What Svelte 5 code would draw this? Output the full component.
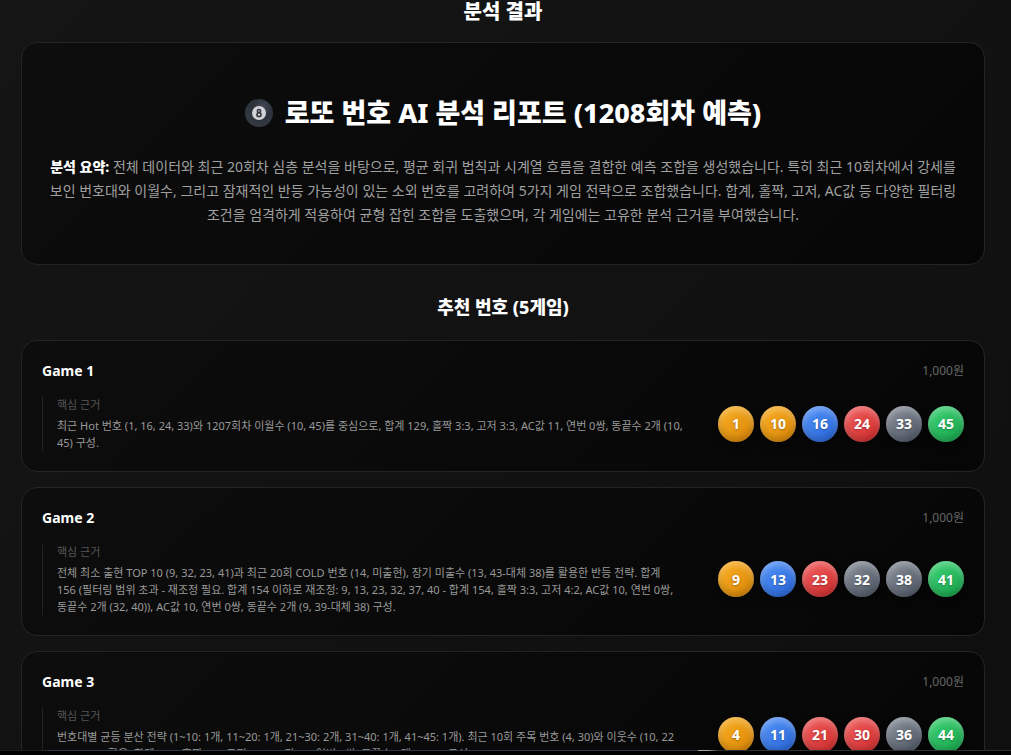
<script>
  const games = [
    {
      name: "Game 1",
      price: "1,000원",
      reason: [
        "최근 Hot 번호 (1, 16, 24, 33)와 1207회차 이월수 (10, 45)를 중심으로, 합계 129, 홀짝 3:3, 고저 3:3, AC값 11, 연번 0쌍, 동끝수 2개 (10,",
        "45) 구성.",
      ],
      numbers: [1, 10, 16, 24, 33, 45],
    },
    {
      name: "Game 2",
      price: "1,000원",
      reason: [
        "전체 최소 출현 TOP 10 (9, 32, 23, 41)과 최근 20회 COLD 번호 (14, 미출현), 장기 미출수 (13, 43-대체 38)를 활용한 반등 전략. 합계",
        "156 (필터링 범위 초과 - 재조정 필요. 합계 154 이하로 재조정: 9, 13, 23, 32, 37, 40 - 합계 154, 홀짝 3:3, 고저 4:2, AC값 10, 연번 0쌍,",
        "동끝수 2개 (32, 40)), AC값 10, 연번 0쌍, 동끝수 2개 (9, 39-대체 38) 구성.",
      ],
      numbers: [9, 13, 23, 32, 38, 41],
    },
    {
      name: "Game 3",
      price: "1,000원",
      reason: [
        "번호대별 균등 분산 전략 (1~10: 1개, 11~20: 1개, 21~30: 2개, 31~40: 1개, 41~45: 1개). 최근 10회 주목 번호 (4, 30)와 이웃수 (10, 22",
        "→ 11, 21) 활용, 합계 146, 홀짝 3:3, 고저 3:3, AC값 10, 연번 0쌍, 동끝수 2개 (4, 44) 구성.",
      ],
      numbers: [4, 11, 21, 30, 36, 44],
    },
  ];

  const ballColor = (n) => {
    if (n <= 10) return "yellow";
    if (n <= 20) return "blue";
    if (n <= 30) return "red";
    if (n <= 40) return "gray";
    return "green";
  };
</script>

<div class="page">
  <main class="content">
    <h2 class="page-title">분석 결과</h2>

    <section class="card report">
      <h1>
        <svg class="eight-ball" viewBox="0 0 28 28" aria-hidden="true">
          <defs>
            <radialGradient id="ball-shade" cx="0.62" cy="0.3" r="0.7">
              <stop offset="0" stop-color="#474b55" />
              <stop offset="0.5" stop-color="#2b323c" />
              <stop offset="1" stop-color="#353942" />
            </radialGradient>
          </defs>
          <circle cx="14" cy="14" r="14" fill="url(#ball-shade)" />
          <circle cx="14" cy="14" r="7" fill="#d2d2d6" />
          <ellipse cx="14" cy="12" rx="1.7" ry="1.5" fill="none" stroke="#2b323c" stroke-width="1.5" />
          <ellipse cx="14" cy="15.7" rx="2.1" ry="1.9" fill="none" stroke="#2b323c" stroke-width="1.5" />
        </svg>
        <span>로또 번호 AI 분석 리포트 (1208회차 예측)</span>
      </h1>
      <p>
        <strong>분석 요약:</strong> 전체 데이터와 최근 20회차 심층 분석을 바탕으로, 평균 회귀 법칙과 시계열 흐름을 결합한 예측 조합을 생성했습니다. 특히 최근 10회차에서 강세를 보인 번호대와 이월수, 그리고 잠재적인 반등 가능성이 있는 소외 번호를 고려하여 5가지 게임 전략으로 조합했습니다. 합계, 홀짝, 고저, AC값 등 다양한 필터링 조건을 엄격하게 적용하여 균형 잡힌 조합을 도출했으며, 각 게임에는 고유한 분석 근거를 부여했습니다.
      </p>
    </section>

    <h3 class="section-title">추천 번호 (5게임)</h3>

    <div class="games">
      {#each games as game (game.name)}
        <article class="card game">
          <header>
            <h4>{game.name}</h4>
            <span class="price">{game.price}</span>
          </header>
          <div class="game-body">
            <div class="reason">
              <span class="reason-label">핵심 근거</span>
              <p>{game.reason.join("\n")}</p>
            </div>
            <div class="balls">
              {#each game.numbers as number}
                <span class="ball {ballColor(number)}">{number}</span>
              {/each}
            </div>
          </div>
        </article>
      {/each}
    </div>
  </main>
  <div class="bottom-edge"></div>
</div>

<style>
  :global(body) {
    background: #000;
  }

  .page {
    display: grid;
    grid-template-rows: minmax(0, 1fr) auto;
    height: 100vh;
    overflow: hidden;
    color: #fff;
    background: linear-gradient(135deg, #151515, #0f0f0f);
    font-family: "Noto Sans", "Noto Sans CJK KR", sans-serif;
    word-break: keep-all;
  }

  .content {
    overflow: hidden;
    padding: 0 26px 0 21px;
  }

  h1,
  h2,
  h3,
  h4,
  p {
    margin: 0;
  }

  .page-title {
    margin-bottom: 18px;
    font-size: 20px;
    font-weight: 800;
    line-height: 24px;
    text-align: center;
  }

  .card {
    border: 1px solid #242424;
    border-radius: 16px;
    background: linear-gradient(135deg, #0d0d0d, #060606);
  }

  .report {
    padding: 48px 24px 37px;
    text-align: center;
  }

  .report h1 {
    display: flex;
    align-items: center;
    justify-content: center;
    gap: 12px;
    margin-bottom: 21px;
    font-size: 27px;
    font-weight: 800;
    line-height: 43px;
  }

  .eight-ball {
    width: 28px;
    height: 28px;
  }

  .report p {
    color: #a0a0a0;
    font-size: 14px;
    line-height: 24px;
  }

  .report strong {
    color: #fff;
    font-weight: 800;
  }

  .section-title {
    margin: 29px 0 19px;
    font-size: 18px;
    font-weight: 800;
    line-height: 27px;
    text-align: center;
  }

  .games {
    display: grid;
    gap: 15px;
  }

  .game {
    padding: 19px 20px 20px;
  }

  .game header {
    display: flex;
    align-items: center;
    justify-content: space-between;
    margin-bottom: 14px;
  }

  h4 {
    font-size: 14px;
    line-height: 22px;
  }

  .price {
    color: #666;
    font-size: 12px;
    line-height: 22px;
  }

  .game-body {
    display: flex;
    align-items: center;
    gap: 24px;
  }

  .reason {
    flex: 1;
    min-width: 0;
    padding-left: 14px;
    border-left: 1px solid #222;
    font-size: 11px;
    line-height: 17px;
  }

  .reason-label {
    display: block;
    margin-bottom: 4px;
    color: #555;
  }

  .reason p {
    color: #999;
    white-space: pre-line;
  }

  .balls {
    display: flex;
    gap: 6px;
  }

  .ball {
    display: flex;
    align-items: center;
    justify-content: center;
    width: 36px;
    height: 36px;
    border-radius: 50%;
    font-size: 14px;
    font-weight: 700;
    text-shadow: 0 1px 2px rgba(0, 0, 0, 0.3);
    box-shadow:
      0 4px 8px rgba(0, 0, 0, 0.4),
      inset 0 -4px 6px rgba(0, 0, 0, 0.2),
      inset 0 4px 6px rgba(255, 255, 255, 0.3);
  }

  .yellow {
    background: linear-gradient(135deg, #fbb024, #d98506);
  }

  .blue {
    background: linear-gradient(135deg, #5595f8, #2563d8);
  }

  .red {
    background: linear-gradient(135deg, #f26060, #d02a2a);
  }

  .gray {
    background: linear-gradient(135deg, #8c919b, #4b5563);
  }

  .green {
    background: linear-gradient(135deg, #3fd477, #16a34a);
  }

  .bottom-edge {
    height: 5px;
    background:
      linear-gradient(
          to right,
          #1c1c1e 4%,
          #2f3844 5% 69%,
          #a8a8a8 69% 70%,
          #2f3033 71%
        )
        top / 100% 1px no-repeat,
      #000;
  }
</style>
